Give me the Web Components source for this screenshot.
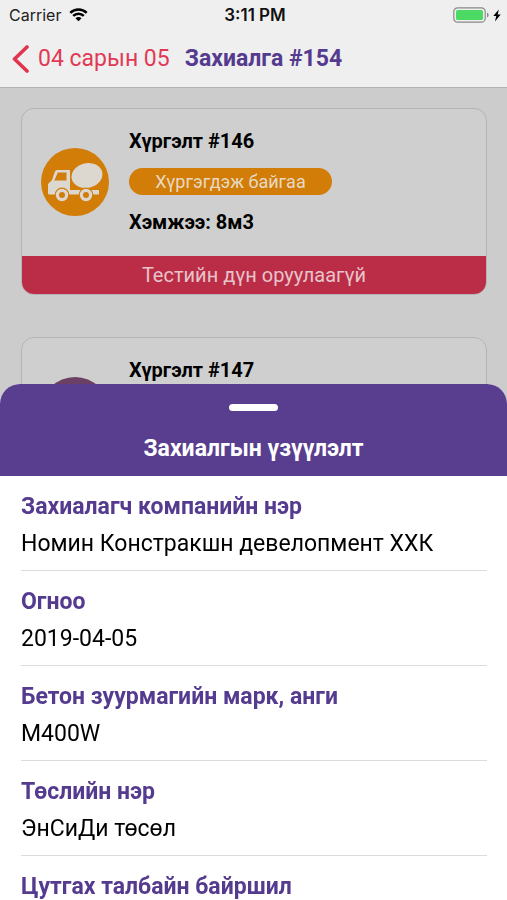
<!DOCTYPE html>
<html lang="mn">
<head>
<meta charset="utf-8">
<meta name="viewport" content="width=device-width, initial-scale=1">
<title>Захиалга #154</title>
<style>
  html, body { margin: 0; height: 100%; }
  body { font-family: Roboto, "Noto Sans", sans-serif; background: #ccc; color: #000; overflow: hidden; }
</style>
</head>
<body>
<order-app></order-app>
<script>
const define = (name, html) => customElements.define(name, class extends HTMLElement {
  constructor() {
    super();
    this.attachShadow({ mode: 'open' }).innerHTML = html;
  }
});

define('status-bar', `
<style>
  :host { display: grid; grid-template-columns: 1fr auto 1fr; align-items: center; height: 30px; padding: 0 6px 0 9px; font: 400 16px/20px Inter, Roboto, sans-serif; color: #222; }
  .left, .right { display: flex; align-items: center; }
  .left { gap: 8px; }
  .right { justify-content: flex-end; gap: 4px; }
  time { font-size: 17px; font-weight: 600; color: #111; }
  svg { display: block; }
</style>
<span class="left"><span>Carrier</span>
  <svg width="19" height="14" viewBox="0 0 20 15" fill="none" stroke="#000" stroke-width="2.7" aria-hidden="true">
    <path d="M1.2 5.2C6.2.4 13.8.4 18.8 5.2"/><path d="M4.3 8.5c3.3-3.1 8.1-3.1 11.4 0"/><path d="M10 14.2 6.7 11c1.9-1.7 4.7-1.7 6.6 0z" fill="#000" stroke="none"/>
  </svg>
</span>
<time>3:11 PM</time>
<span class="right">
  <svg width="36" height="16" viewBox="0 0 36 16" aria-hidden="true">
    <rect x=".8" y=".8" width="31.4" height="14.4" rx="3.8" fill="#eee" stroke="#888" stroke-width="1.2"/>
    <rect x="3" y="3" width="27" height="10" rx="1.5" fill="#4cd964"/>
    <path d="M34 5.5c2.2.8 2.2 4.200 0 5z" fill="#888"/>
  </svg>
  <svg width="8" height="13" viewBox="0 0 8 13" aria-hidden="true"><path d="M5.800.5.300 7h2.900L2 12.500 7.700 5.600H4.700z" fill="#000"/></svg>
</span>`);

define('nav-bar', `
<style>
  :host { display: flex; align-items: center; gap: 15px; height: 57px; padding: 0 12px; box-sizing: border-box; border-bottom: 1px solid #b2b2b2; }
  :host { box-sizing: content-box; }
  a { display: flex; align-items: center; gap: 8px; color: #e03a56; text-decoration: none; font-size: 23px; line-height: 30px; white-space: nowrap; }
  h1 { margin: 0; font-size: 23px; line-height: 30px; font-weight: 700; color: #553b8f; white-space: nowrap; }
  svg { display: block; }
</style>
<a href="#back"><svg width="18" height="28" viewBox="0 0 18 28" fill="none" stroke="#e0344f" stroke-width="3.6" stroke-linecap="round" stroke-linejoin="round" aria-hidden="true"><path d="M15 2 2.500 14 15 26"/></svg><slot name="back"></slot></a>
<h1><slot></slot></h1>`);

define('mixer-icon', `
<style>
  :host { display: flex; width: 68px; height: 68px; border-radius: 50%; background: var(--tone, #d17d07); flex: none; }
  svg { width: 100%; height: 100%; }
</style>
<svg viewBox="0 0 68 68" aria-hidden="true">
  <g fill="#dcd8d0">
    <path fill-rule="evenodd" d="M16 22h13v20h29v4.500H8.500q-1.500 0-1.500-1.500V36l4-4 3-8.500q.5-1.500 2-1.500zM16.800 24.500 13.800 31.500 13 32.500H25.500V24.500z"/>
    <ellipse cx="46" cy="27.500" rx="15.600" ry="12.400" transform="rotate(-13 46 27.500)"/>
  </g>
  <g fill="#dcd8d0" stroke="var(--tone, #d17d07)" stroke-width="1.2">
    <circle cx="21" cy="47" r="6.800"/><circle cx="45" cy="47" r="6.800"/>
  </g>
  <g fill="var(--tone, #d17d07)"><circle cx="21" cy="47" r="3"/><circle cx="45" cy="47" r="3"/></g>
</svg>`);

define('delivery-card', `
<style>
  :host { display: block; border: 1px solid #b4b4b4; border-radius: 13px; background: #cfcfcf; overflow: hidden; }
  .body { display: flex; align-items: center; gap: 20px; padding: 18px 19px 20px; }
  .text { display: flex; flex-direction: column; align-items: flex-start; gap: 13px; }
  h2, p { margin: 0; min-height: 28px; font-size: 20px; line-height: 28px; font-weight: 700; }
  .pill { box-sizing: border-box; min-width: 203px; min-height: 27px; padding: 0 20px; border-radius: 14px; background: var(--tone, #d17d07); color: #e8d9c4; font-size: 18px; line-height: 27px; text-align: center; }
  footer { background: #bb2d47; color: #e6c4ca; font-size: 20px; line-height: 38px; min-height: 38px; text-align: center; }
</style>
<article>
  <div class="body"><mixer-icon></mixer-icon>
    <div class="text"><h2><slot name="title"></slot></h2><span class="pill"><slot name="status"></slot></span><p><slot name="size"></slot></p></div>
  </div>
  <footer><slot name="note"></slot></footer>
</article>`);

define('detail-row', `
<style>
  :host { display: block; padding: 12px 0 8px; border-bottom: 1px solid #dcdcdc; font-size: 23px; line-height: 37px; }
  dl, dd { margin: 0; }
  dt { font-weight: 700; color: #553b8f; }
  dd { min-height: 37px; }
</style>
<dl><dt><slot name="label"></slot></dt><dd><slot></slot></dd></dl>`);

define('bottom-sheet', `
<style>
  :host { position: fixed; inset: 384px 0 0; display: flex; flex-direction: column; border-radius: 20px 20px 0 0; background: #fff; overflow: hidden; }
  header { display: flex; flex-direction: column; align-items: center; gap: 23px; padding: 20px 20px 12px; background: #593e8f; color: #fff; }
  button { width: 49px; height: 7px; padding: 0; border: 0; border-radius: 4px; background: #fff; }
  h2 { margin: 0; font-size: 23px; line-height: 30px; font-weight: 700; }
  .rows { flex: 1; min-height: 0; overflow-y: auto; scrollbar-width: none; padding: 0 20px 0 21px; }
</style>
<header><button type="button" aria-label="Хаах"></button><h2><slot name="title"></slot></h2></header>
<div class="rows"><slot></slot></div>`);

define('order-app', `
<style>
  :host { display: block; min-height: 100%; }
  .top { background: #efefef; }
  main { display: flex; flex-direction: column; gap: 42px; padding: 20px 20px 20px 21px; }
  .next { --tone: #6b4064; }
</style>
<div class="top"><status-bar></status-bar><nav-bar><span slot="back">04 сарын 05</span>Захиалга #154</nav-bar></div>
<main>
  <delivery-card><span slot="title">Хүргэлт #146</span><span slot="status">Хүргэгдэж байгаа</span><span slot="size">Хэмжээ: 8м3</span><span slot="note">Тестийн дүн оруулаагүй</span></delivery-card>
  <delivery-card class="next"><span slot="title">Хүргэлт #147</span></delivery-card>
</main>
<bottom-sheet>
  <span slot="title">Захиалгын үзүүлэлт</span>
  <detail-row><span slot="label">Захиалагч компанийн нэр</span>Номин Констракшн девелопмент ХХК</detail-row>
  <detail-row><span slot="label">Огноо</span>2019-04-05</detail-row>
  <detail-row><span slot="label">Бетон зуурмагийн марк, анги</span>M400W</detail-row>
  <detail-row><span slot="label">Төслийн нэр</span>ЭнСиДи төсөл</detail-row>
  <detail-row><span slot="label">Цутгах талбайн байршил</span></detail-row>
</bottom-sheet>`);
</script>
</body>
</html>
